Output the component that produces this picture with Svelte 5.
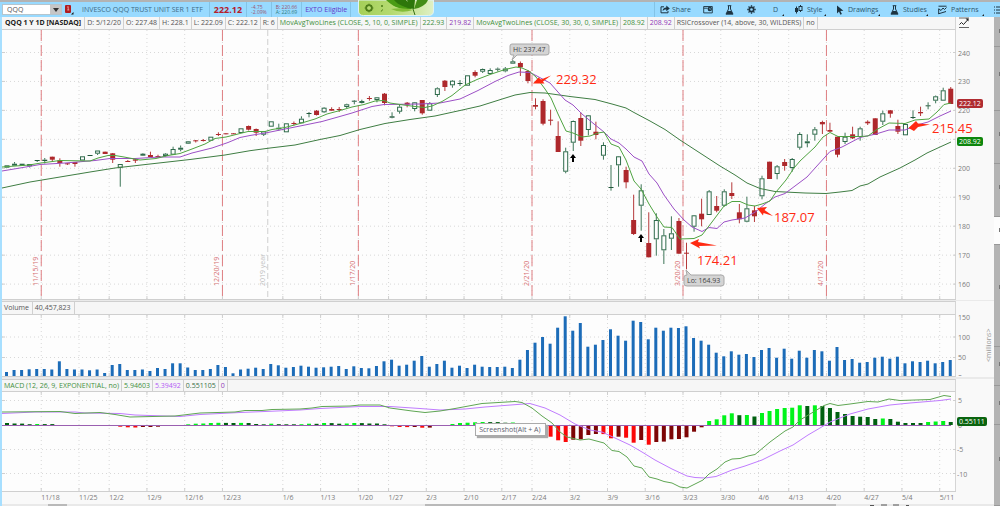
<script>
  let plotWidth = $state(954);

  const LEFT = 2;
  const DESIGN = 954;
  const px = (x) => LEFT + ((x - LEFT) * plotWidth) / DESIGN;
  const slot = (i) => px(7 + 7.55 * i);
  const tick = (i) => px(3.5 + 7.55 * i);
  const line = (pts) => pts.map(([x, y]) => `${px(x)},${y}`).join(' ');

  const sessions = [
    ['11/18', 5], ['11/25', 10], ['12/2', 14], ['12/9', 19], ['12/16', 24], ['12/23', 29], ['1/6', 37],
    ['1/13', 42], ['1/20', 47], ['1/27', 51], ['2/3', 56], ['2/10', 61], ['2/17', 66], ['2/24', 70],
    ['3/2', 75], ['3/9', 80], ['3/16', 85], ['3/23', 90], ['3/30', 95], ['4/6', 100], ['4/13', 104],
    ['4/20', 109], ['4/27', 114], ['5/4', 119], ['5/11', 124]
  ];

  const expirations = [
    ['11/15/19', 5], ['12/20/19', 29], ['1/17/20', 47], ['2/21/20', 70], ['3/20/20', 90], ['4/17/20', 109]
  ];

  // direction, body top, body bottom, high, low
  const candles = [
    ['u', 165.3, 167.7], ['u', 163.7, 165.7, 162], ['u', 163.7, 165.7], ['u', 164, 166.3, 164, 167.5],
    ['u', 160, 161, 160, 162], ['u', 159.7, 161, 158, 163.5], ['d', 156.7, 159.7, 156.7, 161],
    ['d', 160.3, 163, 158.3, 166.7], ['d', 163.3, 164, 163, 165], ['d', 162, 164, 162, 166.7],
    ['u', 156.3, 160.5], ['u', 155, 156], ['u', 150.5, 153.7, 150.5, 155], ['d', 151.7, 154],
    ['d', 153.3, 159.7, 153, 163], ['u', 164, 167.7, 164, 186.7], ['d', 161, 161.8, 160],
    ['d', 159.3, 160.7, 159, 163], ['u', 153.7, 155.7, 153, 156], ['d', 155, 157, 151.7], ['d', 156, 157.3, 154.7],
    ['u', 153.7, 156, 153, 156.5], ['u', 149, 154.7, 146.7], ['u', 147.7, 149.7, 145.5, 151.3],
    ['u', 141.3, 143.7, 141, 144], ['d', 140.3, 141.3, 140, 142.5], ['d', 140, 140.8, 139, 141.5], ['u', 136.7, 140.7],
    ['d', 134, 135, 132.3, 136], ['d', 133.3, 134.3], ['d', 133.3, 134], ['u', 128.3, 133],
    ['d', 126, 129.7, 125.5, 130.5], ['d', 129, 132.7, 128.5, 136], ['u', 131.3, 134.7, 131, 136], ['u', 121.3, 126.7],
    ['u', 127.7, 129.3, 123.7, 130.7], ['u', 123.3, 132.3], ['d', 123, 123.8, 121.5, 125.5],
    ['u', 118.7, 123.3, 116.3], ['u', 113, 113.8, 112, 117.3], ['d', 110.7, 115, 110, 115.5], ['u', 107.7, 112.3, 107, 113],
    ['d', 109, 110.7, 107.3], ['d', 109, 109.8, 107, 112], ['u', 104.3, 107, 103.7, 108],
    ['u', 100.7, 101.5, 100, 104.3], ['u', 101, 103, 99.7, 103.5], ['d', 98, 99, 96, 100.7],
    ['u', 97.3, 100, 97, 102.3], ['d', 93.7, 103, 93, 105.3], ['u', 116.3, 117.7, 112.3, 118.3],
    ['u', 106.7, 111.7, 104.3, 113.7], ['d', 102.7, 104.7, 102, 107.3], ['u', 102.3, 109, 102, 111.3],
    ['d', 100, 113.3, 100, 114.7], ['u', 103.3, 110.7, 102], ['u', 88.3, 95, 87.3, 97], ['d', 80.7, 87, 80, 91],
    ['u', 80.7, 85.3, 80, 87.7], ['u', 83, 84, 80, 86], ['u', 75.3, 85.7], ['d', 72, 75.7, 70.3, 77.3],
    ['u', 69, 71.7, 68.5, 73], ['u', 70, 74, 68.3], ['u', 68.7, 69.7, 67.5, 71.5], ['u', 68.5, 71.3, 67, 72.3],
    ['u', 61.3, 63.7, 60], ['d', 63, 67.3, 61.5, 76], ['d', 71, 81, 70, 83.3], ['d', 105, 106.7, 98.3, 109.3],
    ['d', 101, 123.7, 99.3, 125.3], ['d', 119.7, 120.5, 109.7, 125.3], ['d', 136, 152, 121.3],
    ['u', 151.3, 171.7, 147.7, 173.3], ['u', 121, 142.7, 120.5, 151], ['d', 118, 140.7, 112.3, 146],
    ['u', 115.3, 130, 115, 135.3], ['d', 131.7, 135, 121.7, 139.3], ['u', 145, 155.7, 142.3, 159.7],
    ['u', 187, 187.8, 165, 190.7], ['u', 156.3, 165.3, 156, 186.7], ['d', 170, 182.3, 166.7, 188.3],
    ['d', 220, 234, 194.7, 235], ['u', 190.3, 205.7, 184.3, 230.7], ['d', 243, 257.3, 212.3],
    ['u', 220, 239.3, 213.3, 255.7], ['u', 235.3, 250.3, 229, 264], ['u', 233.3, 238.7, 216.3, 250],
    ['d', 221, 253.7, 218], ['d', 252.7, 253.7, 242.7, 269.3], ['u', 215.3, 226.7, 215, 231.7],
    ['d', 213.7, 219.3, 198.7, 226.3], ['u', 191.3, 215, 190], ['d', 206, 210.7, 196, 212.3],
    ['u', 191.3, 205.7, 189.3, 206.7], ['d', 193, 196, 182.3, 199], ['d', 212.3, 219.3, 204, 223.3],
    ['u', 208.3, 221.7, 196.7, 222.3], ['d', 210.3, 216.3, 206, 222], ['u', 178.3, 196.3, 175.7, 199.3],
    ['d', 161.7, 179], ['u', 166.3, 174, 165, 179.3], ['d', 162, 166, 159, 170.7], ['u', 159, 168, 158, 171.7],
    ['u', 134, 147.7, 132.3, 149.7], ['u', 141.3, 143.3, 134.3, 147.3], ['u', 129.3, 134.7, 127, 140.7],
    ['d', 122, 124.3, 120.7, 134], ['d', 130, 131.7, 122.7], ['d', 136.7, 154.7, 136.7, 157.3],
    ['u', 136.7, 142, 132.7, 144], ['d', 134.3, 138.3, 126.7, 139], ['u', 128.3, 137, 126.7, 140.7],
    ['d', 121.7, 123.3, 120.3, 125], ['d', 118.3, 135], ['u', 113.3, 121.7, 110.7, 125], ['d', 110.3, 113.7, 110, 117.7],
    ['d', 126, 131.7, 119.7, 134], ['u', 124, 135.3], ['u', 117, 118, 110.3, 119], ['d', 112, 113.3, 106.7, 116],
    ['u', 105.3, 106, 102.3, 109.3], ['u', 96.3, 100.7, 95.5, 103.3], ['u', 90.3, 100.7, 87.7], ['d', 88.7, 104, 87]
  ];

  const fast = [[2,167],[29,165],[41,163],[60,160.5],[90,161],[98,158],[108,155.5],[115,155.5],[124,157],[140,160],[156,158.5],[168,155.5],[180,153.5],[192,149],[205,144],[215,138.5],[226,137],[238,134],[248,131.5],[265,131.5],[272,129.5],[285,127.5],[300,123.5],[315,119],[327,114],[340,110.5],[352,107],[364,104.5],[375,101],[384,100.5],[390,103],[400,104.5],[415,106.5],[425,107.5],[432,106],[442,101.5],[452,95.5],[465,85],[477,79.5],[490,74.5],[505,69.5],[516,67],[522,68],[529,71],[536,77],[545,89],[551,98],[558,114],[566,131],[573,133],[582,137],[590,136],[598,133],[604,132],[611,144],[619,147],[626,160],[634,181],[641,189],[649,204],[657,217],[664,227],[672,227.5],[680,239],[694,238.5],[702,235],[712,222],[724,206],[732,201.5],[740,201.5],[748,205],[755,206],[762,204],[770,201],[776,192],[786,180],[794,168],[800,161],[815,147],[823,137],[830,132.5],[838,136.5],[860,136.5],[868,136],[876,130],[889,123],[905,123.5],[915,120],[929,119],[937,112],[944,104.5],[951,103]];
  const slow = [[2,171],[20,168],[40,164.5],[65,163],[95,160.5],[110,158.5],[135,158.5],[160,157],[180,157],[192,153],[212,148],[228,142.5],[240,137.5],[250,135.5],[268,132.5],[285,129],[300,126],[322,121.5],[338,117],[352,113],[372,106.5],[384,104.5],[420,104],[440,103],[460,99],[478,90.5],[495,81.5],[508,75.5],[519,72],[530,72.5],[535,75],[550,83],[565,100],[573,105],[582,114],[594,124],[604,132],[611,139],[619,143],[626,149],[634,157],[642,161],[649,174],[657,183],[664,195],[674,209],[684,220],[692,227],[702,231.5],[709,227.5],[717,228.5],[724,222],[732,220],[745,218],[756,211.5],[765,204],[775,197],[785,193.5],[795,186],[807,177],[816,167],[830,151.5],[842,147],[860,137.5],[876,134],[889,130],[905,130],[917,125],[928,122],[940,116],[951,111]];
  const trend = [[2,188],[30,182],[60,177],[90,172],[115,168],[150,164],[190,159.5],[225,155],[250,150.7],[270,148],[295,145],[320,139.5],[340,135.5],[360,129.5],[385,123.5],[410,119.5],[435,116],[460,110.5],[480,106],[500,99.7],[515,95],[530,92.5],[545,93],[570,96.5],[595,99.5],[612,104],[626,108],[634,112.5],[650,121],[665,129.5],[680,140],[700,153],[720,166],[735,175],[747,183],[760,188.5],[775,191.5],[805,193],[826,193.5],[840,192],[852,190.5],[860,186],[868,184],[880,177],[900,168],[915,160],[927,153],[940,147],[951,142]];

  const volume = [4,6,6,6.7,7,7,6.5,14.7,7,6.5,6.5,5.7,6.5,3,11,12,6,6,6.5,5,8,7,12.7,12.7,8.5,6,6,7,11,9,2.7,6.5,7.3,8.3,7,12,10.7,8.3,9,10.3,9.3,8.3,8.7,9.3,10,7,9.7,8,7.7,10,14.7,16.3,10.3,11.3,15.3,20,9.3,12,15.3,8.3,10.3,8,11.3,9.3,9,9,9.3,8,16.3,26,33.3,39,32.3,48.3,59.7,45.3,53,29.3,31.3,36,46.7,40.3,35.3,55.3,54,36.7,48.3,45.3,48.3,48,49.7,38,35.3,31.3,23.3,19.7,24.7,21.3,22,19,26,28,18.3,27.3,17.3,25.3,18.3,26,24.7,15.3,29,16,17,13.3,14,18.3,19.3,17.3,19.3,12.7,14.7,14,15.3,12.7,14,16];

  const histogram = [2,1.5,1.4,.8,1,.9,.9,0,-.4,-1,-.5,-.5,0,0,-.5,-1.7,-2.3,-2.5,-2,-2,-1.7,-1,-.5,0,.7,1.3,1.5,2,2.2,2.1,2,2.1,2,1,.7,1.3,.8,.7,.7,.8,1.3,1.2,2,1.9,1.3,1.5,2,1.9,1.5,1.5,.7,-1.3,-2,-2.1,-2,-2.7,-2.6,-.7,0,1,2,2.3,2.7,3,2.9,2.9,2.3,2.5,1.7,-1,-3,-7,-11.7,-15.3,-17,-14.7,-14.3,-10,-9,-9.1,-13.3,-11.7,-12.7,-17.7,-15,-19.7,-17,-16.6,-14.3,-14,-12.3,-6.7,-2.3,4,5.7,9.7,11.7,9.8,10,8.5,12,14,16,17,17.3,19.7,19,19.7,19,17,13,11,9,8.3,8,6,6.5,6,3.3,2,2,2,3,3.5,4,3];

  const macd = [[2,412],[60,411.5],[75,413.5],[100,412.5],[115,414.5],[130,417],[175,416],[200,413],[235,412],[245,410.5],[262,410.5],[272,409.5],[300,409],[312,408],[322,406.5],[350,406],[360,405],[380,405],[390,408],[412,411],[425,412.5],[440,411],[455,408.5],[482,403.5],[515,401.5],[522,402.5],[532,408],[542,416],[552,423],[560,432],[567,437],[580,440],[589,439],[604,443],[612,450.5],[619,451.5],[627,457],[634,466],[642,468],[649,477],[657,479],[664,481.5],[672,483],[680,487],[687,488],[695,484],[703,480],[709,474],[717,469],[725,462],[732,459],[740,458.5],[748,456],[755,454.5],[770,442],[785,431],[793,427],[800,420],[815,411],[824,405.5],[830,403.5],[838,405.5],[850,404],[868,401.5],[878,402],[889,399],[900,400.5],[930,399.5],[944,395.5],[951,396.5]];
  const signal = [[2,413.5],[35,412],[75,412],[85,413],[120,413.5],[135,415],[180,416.5],[200,414.5],[240,412.5],[265,411.5],[300,410],[320,408.5],[360,406.5],[390,406.5],[420,408.5],[440,410],[465,409],[485,407],[530,403.5],[545,408],[560,415],[575,424],[590,430],[602,432],[615,438],[630,445],[642,452],[655,460],[672,469],[687,476],[695,477.5],[705,478],[716,476.5],[732,470],[745,466],[762,460],[780,451],[793,445],[808,435],[820,428],[830,422],[850,414],[868,409],[890,405],[910,403],[940,400.5],[951,399]];

  const barColor = (v, i) => {
    const prev = i ? histogram[i - 1] : v;
    if (v >= 0) return v > prev ? '#00f41a' : '#006010';
    return v < prev ? '#fa0808' : '#7d0505';
  };

  const priceScale = [240, 230, 220, 210, 200, 190, 180, 170, 160];
  const priceY = (p) => 52.5 + (240 - p) * 2.895;

  const notes = [
    { text: '229.32', x: 556, y: 84, arrow: [[533,83.5],[538.5,77.5],[541,79.5],[551,75.5],[543,81.5],[544.5,83.5]] },
    { text: '174.21', x: 697, y: 265, arrow: [[690,243],[699,239],[698,242],[717,245.5],[699,246],[700,248.5]] },
    { text: '187.07', x: 774, y: 222, arrow: [[757,208],[767,207],[764.5,210],[773,216],[763.5,213],[763,215.5]] },
    { text: '215.45', x: 932, y: 133, arrow: [[908.5,128],[916,121],[918,123.5],[930,124.5],[918,127],[914,131]] }
  ];

  const studies = [
    ['D: 5/12/20', 'grey'], ['O: 227.48', 'grey'], ['H: 228.1', 'grey'], ['L: 222.09', 'grey'], ['C: 222.12', 'grey'],
    ['R: 6', 'grey'], ['MovAvgTwoLines (CLOSE, 5, 10, 0, SIMPLE)', 'green'], ['222.93', 'green'], ['219.82', 'purple'],
    ['MovAvgTwoLines (CLOSE, 30, 30, 0, SIMPLE)', 'green'], ['208.92', 'green'], ['208.92', 'purple'],
    ['RSICrossover (14, above, 30, WILDERS)', 'grey'], ['no', 'grey']
  ];
</script>

{#snippet flask()}
  <svg width="9" height="10" viewBox="0 0 9 10" aria-hidden="true">
    <path d="M2.7 .7h3.6M3.5 1v3L1 9.2h7L5.5 4V1" fill="none" stroke="#1d3442" />
    <path d="M2.6 6h3.8l1.4 3H1.2z" fill="#1d3442" />
  </svg>
{/snippet}

{#snippet verticals(top, bottom, ends)}
  {#each sessions as [, i]}
    <line class="grid" x1={tick(i)} x2={tick(i)} y1={top} y2={bottom} />
    <path class="tick" d="M{tick(i)} {bottom}v-3M{tick(i)} {top}v{ends}" />
  {/each}
{/snippet}

{#snippet level(y)}
  <line class="grid" x1={LEFT} x2={px(956)} y1={y} y2={y} />
  <path class="tick" d="M{LEFT} {y}h3M{px(956)} {y}h-3" />
{/snippet}

<div class="app">
  <div class="window-edge"></div>

  <header class="toolbar">
    <div class="symbol">
      <input aria-label="Symbol" value="QQQ" />
      <button class="drop" aria-label="Symbol list"><svg width="6" height="4" viewBox="0 0 6 4"><path d="M0 0h6L3 4z" fill="#333" /></svg></button>
    </div>
    <button class="link-badge" aria-label="Link group">
      <svg width="10" height="11" viewBox="0 0 10 11"><rect x="1" y="1" width="6" height="8" rx="1" fill="#b01c20" /><path d="M3.2 3.2l1-.7V6M3.3 6h2" fill="none" stroke="#f3b5b5" stroke-width=".8" /><path d="M9.5 8v2.5H7z" fill="#111" /></svg>
    </button>
    <span class="name">INVESCO QQQ TRUST UNIT SER 1 ETF</span>
    <strong class="last">222.12</strong>
    <span class="pair change"><span>-4.75</span><span>-2.09%</span></span>
    <span class="pair"><span class="bid">B: 220.66</span><span class="ask">A: 220.69</span></span>
    <span class="exto">EXTO Eligible</span>
    <span class="spacer"></span>
    <button class="share">
      <svg width="10" height="9" viewBox="0 0 10 9"><path d="M4 1.8H1v6h7V6" fill="none" stroke="#1d3442" /><path d="M2.6 6C2.8 3.5 4 2.5 6.3 2.4V.4L9.8 3.4 6.3 6.2V4.4C4.6 4.3 3.6 4.8 2.6 6z" fill="#1d3442" /></svg>
      Share
    </button>
    <button class="note" aria-label="Alerts">
      <svg width="10" height="9" viewBox="0 0 10 9"><path d="M.7 1.5h8.6v6.4H.7zM.7 3.2h4" fill="none" stroke="#1d3442" stroke-width=".9" /><circle cx="6.8" cy="4" r="2.2" fill="#1d3442" /><path d="M6.8 2.8V4.2h1" fill="none" stroke="#9adcff" stroke-width=".6" /></svg>
    </button>
    <button class="lab" aria-label="Lab">{@render flask()}</button>
    <button class="gear" aria-label="Settings">
      <svg width="9" height="9" viewBox="-5 -5 10 10"><circle r="2.4" fill="none" stroke="#1d3442" stroke-width="1.8" /><path d="M0-4.7V-3M0 4.7V3M-4.7 0H-3M4.7 0H3M-3.3-3.3l1.2 1.2M3.3 3.3L2.1 2.1M-3.3 3.3l1.2-1.2M3.3-3.3L2.1-2.1" stroke="#1d3442" stroke-width="1.5" /></svg>
    </button>
    <button class="period more">D</button>
    <button class="style more">
      <svg width="9" height="9" viewBox="0 0 9 9"><path d="M2.5 1.5v7M6.5 0v7" stroke="#1d3442" /><rect x="1" y="3" width="3" height="4" fill="#1d3442" /><rect x="5" y="1.5" width="3" height="4" fill="#9adcff" stroke="#1d3442" /></svg>
      Style
    </button>
    <button class="draw more">
      <svg width="8" height="10" viewBox="0 0 8 10"><path d="M1 .5l6.4 5.2-3 .3 1.5 3-1.5.7L3 6.6 1 8.5z" fill="#1d3442" /></svg>
      Drawings
    </button>
    <button class="study more">{@render flask()} Studies</button>
    <button class="pattern more">
      <svg width="9" height="10" viewBox="0 0 9 10"><path d="M.5 1.2h8M.7 9V3.5M.5 8.8L8 6.5M1 4l2 1.5L5 3l1.5 1.5L8.5 2.5" fill="none" stroke="#1d3442" /></svg>
      Patterns
    </button>
    <button class="list" aria-label="Menu"><svg width="6" height="8" viewBox="0 0 6 8"><path d="M0 1h1M2 1h4M0 4h1M2 4h4M0 7h1M2 7h4" stroke="#1d3442" /></svg></button>
    <div class="leaf">
      <svg width="76" height="16" viewBox="0 0 76 16" aria-hidden="true">
        <defs><linearGradient id="meadow"><stop stop-color="#a5cf58" /><stop offset=".45" stop-color="#b5da72" /><stop offset="1" stop-color="#e0f0c6" /></linearGradient></defs>
        <path d="M.5 0h75v11q0 4.500-5 4.500H5.500q-5 0-5-4.500z" fill="url(#meadow)" stroke="#dff2f4" />
        <path d="M28 0h14l12 9C44 11 34 6 28 0z" fill="#4a9c14" />
        <path d="M36 0h12l8 9C48 8 40 5 36 0zM49 0h8l-1 9C52 6 50 3 49 0z" fill="#2d760b" />
        <path d="M59 0h11C68 5 62 8 56 9z" fill="#438d17" />
        <path d="M33 9q11-2 22 1-12 4-22-1z" fill="#83bd39" />
        <path d="M55 9l2 6" stroke="#376f16" />
        <circle cx="11" cy="8" r="3" fill="none" stroke="#4d7c18" stroke-width="1.500" />
        <path d="M11 3.500v9M6.500 8h9M8 5l6 6M14 5l-6 6" stroke="#4d7c18" stroke-width=".8" />
        <circle cx="11" cy="8" r="1.800" fill="#b5da72" />
        <circle cx="24" cy="6" r="1" fill="#4d7c18" /><path d="M24.500 9.500l-1.200 2" stroke="#4d7c18" />
      </svg>
    </div>
  </header>

  <div class="body">
    <main class="charts">
      <section class="pane">
        <div class="head">
          <span class="title">QQQ 1 Y 1D [NASDAQ]</span>
          {#each studies as [label, tone]}<span class={tone}>{label}</span>{/each}
        </div>
        <div class="corner">
          <svg width="12" height="12" viewBox="0 0 12 12"><path d="M1 1h10M1 10.500h10" stroke="#666" /><path d="M1.500 7.500l2-2 2 2L10 2.500" fill="none" stroke="#222" /><path d="M10.500 1.500v3l-3-3z" fill="#222" /></svg>
        </div>
        <div class="plot" bind:clientWidth={plotWidth}>
          <svg class="over" width={plotWidth} height="269" viewBox="2 30 {plotWidth} 269">
            {@render verticals(30, 299, 0)}
            {#each priceScale as p}{@render level(priceY(p))}{/each}
            {#each expirations as [label, i]}
              <line class="expiry" x1={tick(i)} x2={tick(i)} y1="30" y2="299" />
              <text class="expiry-label" transform="translate({tick(i) - 3} 286) rotate(-90)">{label}</text>
            {/each}
            <line class="year" x1={tick(35)} x2={tick(35)} y1="30" y2="299" />
            <text class="year-label" transform="translate({tick(35) - 3} 286) rotate(-90)">2019 year</text>

            {#each candles as [dir, top, bottom, high, low], i}
              {@const x = slot(i)}
              {@const h = Math.max(bottom - top, 1)}
              {#if dir === 'd'}
                <line x1={x} x2={x} y1={high ?? top} y2={low ?? bottom} stroke="#b5393b" />
                <rect x={x - 2.5} y={top} width="5" height={h} fill="#ae282c" />
              {:else}
                <line x1={x} x2={x} y1={high ?? top} y2={top} stroke="#3d7557" />
                <line x1={x} x2={x} y1={bottom} y2={low ?? bottom} stroke="#3d7557" />
                {#if h > 1.5}
                  <rect x={x - 2} y={top + 0.5} width="4" height={h - 1} fill="#fdfdfd" stroke="#2f6b4c" />
                {:else}
                  <rect x={x - 2.5} y={top} width="5" height={h} fill="#23593c" />
                {/if}
              {/if}
            {/each}

            <polyline points={line(trend)} stroke="#3f7d43" class="series" />
            <polyline points={line(slow)} stroke="#9c50c6" class="series" />
            <polyline points={line(fast)} stroke="#4fa341" class="series" />

            <path d="M{px(573)} 154l3 4h-2v4h-2v-4h-2z" fill="#000" />
            <path d="M{px(641)} 234l3 4h-2v4h-2v-4h-2z" fill="#000" />

            <path class="balloon" d="M{px(512)} 60l2-5h-2q-2 0-2-2v-7q0-2 2-2h34q3 0 3 2v7q0 2-3 2h-29z" />
            <text class="balloon-text" x={px(513)} y="52">Hi: 237.47</text>
            <path class="balloon" d="M{px(686)} 270l5 5h30q3 0 3 2v7q0 2-3 2h-34q-3 0-3-2v-7q0-2 3-2z" />
            <text class="balloon-text" x={px(687)} y="283">Lo: 164.93</text>

            {#each notes as note}
              <polygon points={line(note.arrow)} fill="#ff2a12" />
              <text class="note-text" x={px(note.x)} y={note.y}>{note.text}</text>
            {/each}
          </svg>
        </div>
        <div class="axis">
          <svg width="38" height="269" viewBox="956 30 38 269">
            {#each priceScale as p}{#if p !== 210}<text x="958" y={priceY(p) + 3}>{p}</text>{/if}{/each}
            <rect x="957" y="99" width="26" height="9" rx="2" fill="#b02c31" /><text class="tag" x="959" y="106">222.12</text>
            <rect x="957" y="137" width="26" height="9" rx="2" fill="#0d860d" /><text class="tag" x="959" y="144">208.92</text>
          </svg>
        </div>
      </section>

      <section class="pane">
        <div class="head low"><span class="grey">Volume</span><span class="grey">40,457,823</span></div>
        <div class="plot">
          <svg width={plotWidth} height="61" viewBox="2 315 {plotWidth} 61">
            {@render verticals(315, 376, 3)}
            {@render level(337)}
            {@render level(357.5)}
            {#each volume as v, i}
              <rect x={slot(i) - 2} y={376 - v} width="3" height={v} fill="#1c6cb8" />
            {/each}
          </svg>
        </div>
        <div class="axis">
          <svg width="38" height="61" viewBox="956 315 38 61">
            <text x="958" y="320">150</text><text x="958" y="340">100</text><text x="958" y="360">50</text><text x="958" y="380">0</text>
            <text class="unit" transform="translate(991 362) rotate(-90)">&lt;millions&gt;</text>
          </svg>
        </div>
      </section>

      <section class="pane">
        <div class="head">
          <span class="green">MACD (12, 26, 9, EXPONENTIAL, no)</span><span class="green">5.94603</span><span class="violet">5.39492</span><span class="moss">0.551105</span><span class="purple">0</span>
        </div>
        <div class="plot">
          <svg width={plotWidth} height="99" viewBox="2 392 {plotWidth} 99">
            {@render verticals(392, 491, 3)}
            {@render level(400.5)}
            {@render level(449.5)}
            {@render level(473.5)}
            {#each histogram as v, i}
              {#if v}<rect x={slot(i) - 2} y={v > 0 ? 425 - v : 425} width="4" height={Math.abs(v)} fill={barColor(v, i)} />{/if}
            {/each}
            <line x1="2" x2={px(951)} y1="425.5" y2="425.5" stroke="#9a5fb0" />
            <polyline points={line(signal)} stroke="#c07cff" class="series" />
            <polyline points={line(macd)} stroke="#5fa653" class="series" />
          </svg>
          <div class="tip" role="tooltip">Screenshot(Alt + A)</div>
        </div>
        <div class="axis">
          <svg width="38" height="99" viewBox="956 392 38 99">
            <text x="958" y="403">5</text><text x="958" y="428">0</text><text x="957" y="452">-5</text><text x="957" y="477">-10</text>
            <rect x="957" y="417" width="30" height="9" rx="2" fill="#0a640f" /><text class="tag" x="959" y="424">0.55111</text>
          </svg>
        </div>
      </section>

      <svg class="dates" width={plotWidth} height="12" viewBox="2 492 {plotWidth} 12">
        {#each sessions as [label, i]}<text x={tick(i)} y="500">{label}</text>{/each}
      </svg>
      <div class="scroll">
        <svg width={plotWidth} height="2" viewBox="2 504 {plotWidth} 2">
          <path d="M{px(48)} 505h19M{px(425)} 505h411" stroke="#b9b9b9" stroke-width="2" />
          <path d="M{px(870)} 505.500h4M{px(881)} 505h6M{px(893)} 505h6M{px(906)} 505.500h3" stroke="#555" />
        </svg>
      </div>
    </main>

    <aside class="rail">
      <span class="seg a"></span><span class="seg b"></span><span class="seg c"></span><span class="seg c"></span><span class="seg on"></span><span class="seg d"></span><span class="seg e"></span><span class="seg e"></span><span class="seg rest"></span>
    </aside>
  </div>
</div>

<style>
  :global(body) { margin: 0; background: #f9f9f9; }
  .app { font: 7px/10px "Open Sans", "Noto Sans", sans-serif; color: #555; overflow: hidden; }
  button { font: inherit; color: #2c566e; background: none; border: 0; padding: 0; margin: 0; display: flex; align-items: center; gap: 4px; box-sizing: border-box; }
  svg { display: block; flex: none; }
  .window-edge { height: 2px; background: #b3b3b3; }

  .toolbar { position: relative; display: flex; align-items: stretch; height: 15px; background: #98daff; box-sizing: border-box; padding-left: 2px; white-space: nowrap; }
  .toolbar > span, .toolbar > strong { display: flex; align-items: center; }
  .symbol { display: flex; width: 60px; height: 11px; margin-top: 2px; border: 1px solid #b5c5cd; box-sizing: border-box; background: #fff; }
  .symbol input { font: inherit; color: #555; border: 0; padding: 0 0 0 4px; margin: 0; flex: 1; min-width: 0; background: none; outline: none; }
  .drop { width: 11px; justify-content: center; background: #c6c6c6; }
  .link-badge { width: 14px; padding-left: 2px; }
  .name { padding: 0 6px; color: #3f6b85; }
  .last { font-size: 9px; color: #b5202c; padding: 0 4px; border-left: 1px solid #83c3e6; }
  .toolbar .pair { flex-direction: column; align-items: flex-start; justify-content: center; font-size: 5px; line-height: 5px; padding: 0 4px; border-left: 1px solid #83c3e6; }
  .change, .bid { color: #9a5470; }
  .ask { color: #2f7a7c; }
  .exto { padding: 0 3px; color: #6236c8; border-left: 1px solid #83c3e6; border-right: 1px solid #83c3e6; }
  .spacer { flex: 1; }
  .share { border-left: 1px solid #83c3e6; padding-left: 5px; width: 43px; gap: 2px; }
  .note { width: 26px; padding-left: 6px; }
  .lab { width: 23px; padding-left: 2px; }
  .gear { width: 24px; padding-left: 1px; }
  .period { width: 24px; padding-left: 3px; }
  .style { width: 42px; }
  .draw { width: 54px; }
  .study { width: 48px; }
  .pattern { width: 56px; }
  .list { width: 6px; }
  .more { position: relative; }
  .more::after { content: ""; position: absolute; right: 10px; bottom: 1px; border: 1px solid; border-color: transparent #222 #222 transparent; }
  .leaf { position: absolute; left: 358px; top: -2px; }

  .body { display: flex; }
  .charts { flex: 1; min-width: 0; border-left: 2px solid #a7dfff; background: #f9f9f9; }
  .rail { width: 6px; background: #b4b4b4; display: flex; flex-direction: column; }
  .seg { border-bottom: 1px solid #999; position: relative; }
  .seg::after { content: ""; position: absolute; right: 0; top: 40%; width: 1px; height: 4px; background: #777; }
  .a { height: 29px; }
  .b { height: 63px; }
  .c { height: 52px; }
  .on { height: 27px; background: #fdfdfd; }
  .d { height: 101px; }
  .e { height: 38px; }
  .rest { flex: 1; }

  .pane { display: grid; grid-template-columns: minmax(0, 1fr) 38px; }
  .head { display: flex; height: 13px; box-sizing: border-box; border-bottom: 1px solid #cfcfcf; border-right: 1px solid #d5d5d5; background: #f6f6f6; white-space: nowrap; grid-column: 1; }
  .head span { padding: 0 2px; line-height: 12px; border-right: 1px solid #d0d0d0; }
  .head .title { padding: 0 3px; }
  .pane + .pane .head { border-top: 1px solid #cfcfcf; }
  .pane + .pane .head span { line-height: 11px; }
  .pane .head.low { height: 14px; }
  .head.low span { padding: 0 3px 0 2px; }
  .corner { grid-column: 2; padding-left: 2px; }
  .title { font-weight: 700; color: #222; }
  .grey { color: #555; }
  .green { color: #3f9040; }
  .purple { color: #9038b8; }
  .violet { color: #b45cf5; }
  .moss { color: #3a7048; }
  .plot { grid-column: 1; position: relative; background: #fdfdfd; border-bottom: 1px solid #cfcfcf; box-shadow: inset -1px 0 #d5d5d5; }
  .pane:not(:last-of-type) { border-bottom: 2px solid #eaeaea; }
  .pane:first-child { border-bottom-width: 1px; }
  .axis { grid-column: 2; }
  .over { position: relative; z-index: 1; overflow: visible; pointer-events: none; }

  .grid { stroke: #d8d8d8; stroke-dasharray: 1 3; }
  .tick { stroke: #cfcfcf; fill: none; }
  .expiry { stroke: #df7f82; stroke-dasharray: 11 4; }
  .expiry-label { fill: #d66f72; }
  .year { stroke: #cfcfcf; stroke-dasharray: 6 3; }
  .year-label { fill: #bdbdbd; }
  .series { fill: none; stroke-linejoin: round; }
  .balloon { fill: #d4d4d4; stroke: #a8a8a8; }
  .balloon-text { fill: #444; }
  .note-text { font-size: 13px; fill: #ff2a12; }
  .axis text, .dates text { fill: #7c7c7c; }
  .axis .tag { fill: #fff; }
  .axis .unit { fill: #999; }
  .tip { position: absolute; left: 49.600%; top: 31px; padding: 0 4px 0 3px; border: 1px solid #aaa; background: #fdfdfd; color: #5d6270; line-height: 11px; box-shadow: 2px 2px 1px #aaa; white-space: nowrap; }
  .scroll { background: #e9e9e9; }
</style>
